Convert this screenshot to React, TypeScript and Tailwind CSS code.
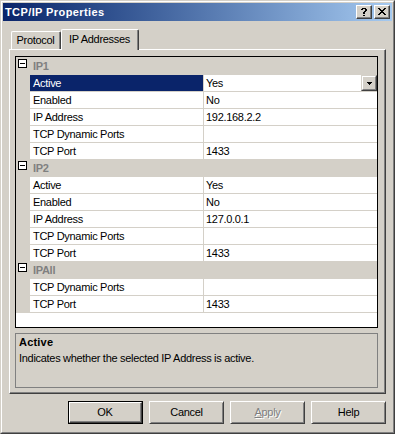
import type { ReactNode } from "react";

type Prop = { name: string; value: string; selected?: boolean; dropdown?: boolean };
type Category = { title: string; props: Prop[] };

const categories: Category[] = [
  {
    title: "IP1",
    props: [
      { name: "Active", value: "Yes", selected: true, dropdown: true },
      { name: "Enabled", value: "No" },
      { name: "IP Address", value: "192.168.2.2" },
      { name: "TCP Dynamic Ports", value: "" },
      { name: "TCP Port", value: "1433" },
    ],
  },
  {
    title: "IP2",
    props: [
      { name: "Active", value: "Yes" },
      { name: "Enabled", value: "No" },
      { name: "IP Address", value: "127.0.0.1" },
      { name: "TCP Dynamic Ports", value: "" },
      { name: "TCP Port", value: "1433" },
    ],
  },
  {
    title: "IPAll",
    props: [
      { name: "TCP Dynamic Ports", value: "" },
      { name: "TCP Port", value: "1433" },
    ],
  },
];

// tiny bitmap glyphs, like the Marlett ones on classic windows
function Pixels({ rows }: { rows: string[] }) {
  const w = rows[0].length;
  const h = rows.length;
  return (
    <svg width={w} height={h} viewBox={`0 0 ${w} ${h}`} shapeRendering="crispEdges" aria-hidden="true">
      {rows.flatMap((r, y) =>
        [...r].map((c, x) =>
          c === "X" ? <rect key={`${x}-${y}`} x={x} y={y} width={1} height={1} fill="currentColor" /> : null
        )
      )}
    </svg>
  );
}

const helpGlyph = [".XXXX.", "XX..XX", "....XX", "...XX.", "..XX..", "..XX..", "......", "..XX.."];
const closeGlyph = ["XX....XX", ".XX..XX.", "..XXXX..", "...XX...", "..XXXX..", ".XX..XX.", "XX....XX"];
const arrowGlyph = ["XXXXX", ".XXX.", "..X.."];

function CaptionButton({ children }: { children: ReactNode }) {
  return (
    <div className="h-[14px] w-[16px] border border-t-white border-l-white border-r-[#404040] border-b-[#404040] bg-[#d4d0c8]">
      <div className="flex h-full w-full items-center justify-center border-r border-b border-[#808080] text-black">
        {children}
      </div>
    </div>
  );
}

function DialogButton({ children, isDefault = false, disabled = false }: { children: ReactNode; isDefault?: boolean; disabled?: boolean }) {
  const label = (
    <div
      className={[
        "flex h-full w-full items-center justify-center border-r border-b border-[#808080]",
        disabled ? "text-[#808080] [text-shadow:1px_1px_0_#fff]" : "text-black",
      ].join(" ")}
    >
      {children}
    </div>
  );
  if (isDefault) {
    return (
      <div className="h-[23px] w-[75px] border border-black">
        <div className="h-full w-full border border-t-white border-l-white border-r-[#404040] border-b-[#404040]">{label}</div>
      </div>
    );
  }
  return (
    <div className="h-[23px] w-[75px] border border-t-white border-l-white border-r-[#404040] border-b-[#404040]">
      <div className="h-full w-full border-t border-l border-[#d4d0c8]">{label}</div>
    </div>
  );
}

function CategoryRow({ title }: { title: string }) {
  return (
    <div className="flex h-[17px] border-t border-[#d4d0c8] bg-[#d4d0c8]">
      <div className="w-[14px] pt-[1px] pl-[2px]">
        <div className="flex h-[9px] w-[9px] items-center justify-center border border-black bg-white">
          <div className="h-px w-[5px] bg-black" />
        </div>
      </div>
      <div className="pl-[3px] font-bold leading-[16px] text-[#808080]">{title}</div>
    </div>
  );
}

function PropRow({ prop }: { prop: Prop }) {
  return (
    <div className="flex h-[17px] border-t border-[#d4d0c8]">
      <div className="w-[14px] bg-[#d4d0c8]" />
      <div
        className={[
          "w-[173px] pl-[3px] leading-[16px] whitespace-nowrap",
          prop.selected ? "bg-[#0a246a] text-white" : "bg-white",
        ].join(" ")}
      >
        {prop.name}
      </div>
      <div className="w-px bg-[#d4d0c8]" />
      <div className="flex flex-1 bg-white">
        <span className="flex-1 pl-[2px] leading-[16px]">{prop.value}</span>
        {prop.dropdown && (
          <div className="h-[16px] w-[16px] border border-t-[#d4d0c8] border-l-[#d4d0c8] border-r-[#404040] border-b-[#404040] bg-[#d4d0c8]">
            <div className="flex h-full w-full items-center justify-center border border-t-white border-l-white border-r-[#808080] border-b-[#808080] pt-px">
              <Pixels rows={arrowGlyph} />
            </div>
          </div>
        )}
      </div>
    </div>
  );
}

export default function App() {
  return (
    <div className="h-[434px] w-[395px] border border-t-[#d4d0c8] border-l-[#d4d0c8] border-r-[#404040] border-b-[#404040] bg-[#d4d0c8] font-['Liberation_Sans',Arial,sans-serif] text-[11px] tracking-[-0.3px] text-black">
      <div className="h-full border border-t-white border-l-white border-r-[#808080] border-b-[#808080] p-px">
        {/* ── Title bar ── */}
        <div className="flex h-[18px] items-center justify-between bg-linear-to-r from-[#0a246a] to-[#a6caf0] pr-[2px] pl-[2px]">
          <span className="font-bold tracking-[0.4px] text-white">TCP/IP Properties</span>
          <div className="flex gap-[2px]">
            <CaptionButton>
              <Pixels rows={helpGlyph} />
            </CaptionButton>
            <CaptionButton>
              <Pixels rows={closeGlyph} />
            </CaptionButton>
          </div>
        </div>

        {/* ── Tabs ── */}
        <div className="mt-[8px] ml-[8px] flex h-[20px] items-end">
          <div className="h-[18px] w-[50px] rounded-t-[2px] border-t border-l border-t-white border-l-white border-r border-r-[#404040]">
            <div className="flex h-full items-center justify-center border-r border-[#808080]">Protocol</div>
          </div>
          <div className="relative z-10 -mb-px h-[21px] w-[78px] rounded-t-[2px] border-t border-l border-t-white border-l-white border-r border-r-[#404040] bg-[#d4d0c8]">
            <div className="flex h-full items-center justify-center border-r border-[#808080] pb-[2px]">IP Addresses</div>
          </div>
        </div>

        {/* ── Tab page ── */}
        <div className="ml-[6px] h-[345px] w-[377px] border border-t-white border-l-white border-r-[#404040] border-b-[#404040]">
          <div className="h-full border-r border-b border-[#808080] pt-[6px] pr-[6px] pl-[5px]">
            <div className="h-[272px] border border-black bg-white">
              <div className="border-b border-[#d4d0c8]">
                {categories.map((cat) => (
                  <div key={cat.title}>
                    <CategoryRow title={cat.title} />
                    {cat.props.map((p, i) => (
                      <PropRow key={i} prop={p} />
                    ))}
                  </div>
                ))}
              </div>
            </div>

            <div className="mt-[5px] h-[55px] border border-[#808080] pt-[2px] pl-[3px]">
              <div className="leading-[13px] font-bold tracking-[0.2px]">Active</div>
              <div className="mt-[3px] leading-[13px]">Indicates whether the selected IP Address is active.</div>
            </div>
          </div>
        </div>

        {/* ── Buttons ── */}
        <div className="mt-[7px] ml-[6px] flex w-[377px] justify-end gap-[6px]">
          <DialogButton isDefault>OK</DialogButton>
          <DialogButton>Cancel</DialogButton>
          <DialogButton disabled>
            <span>
              <span className="underline underline-offset-1">A</span>pply
            </span>
          </DialogButton>
          <DialogButton>Help</DialogButton>
        </div>
      </div>
    </div>
  );
}
